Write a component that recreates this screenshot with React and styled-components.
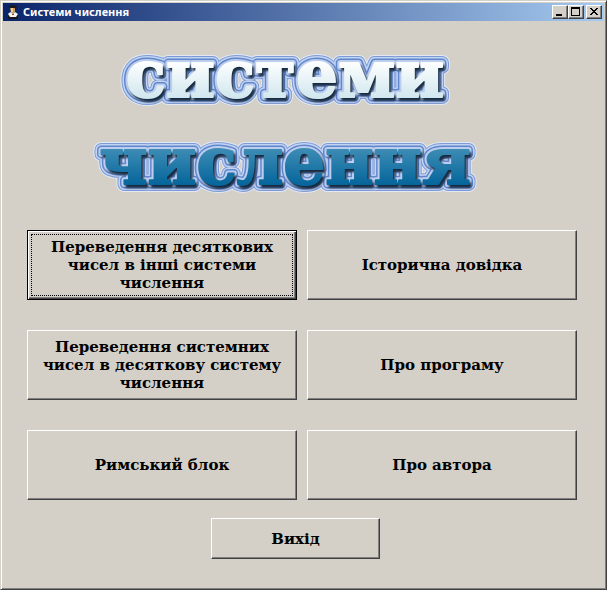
import styled, {createGlobalStyle, css} from "styled-components";

const modes = [
    {id: "from-decimal", label: "Переведення десяткових чисел в інші системи числення", selected: true},
    {id: "history", label: "Історична довідка"},
    {id: "to-decimal", label: "Переведення системних чисел в десяткову систему числення"},
    {id: "about", label: "Про програму"},
    {id: "roman", label: "Римський блок"},
    {id: "author", label: "Про автора"}
];

const LogoWord = ({id, text, from, to}) => {
    return (
        <StyledLogoWord>
            <defs>
                <linearGradient id={`${id}-fill`} x1="0" y1="14" x2="0" y2="52" gradientUnits="userSpaceOnUse">
                    <stop offset="0" stopColor={from}/>
                    <stop offset="1" stopColor={to}/>
                </linearGradient>
                <filter id={`${id}-soft`} x="-5%" y="-20%" width="110%" height="140%">
                    <feGaussianBlur stdDeviation="0.8"/>
                </filter>
                <text id={id} x="50%" y="50" textAnchor="middle">{text}</text>
            </defs>
            <use href={`#${id}`} stroke="#e3e8f3" strokeWidth="16"/>
            <use href={`#${id}`} stroke="#7c9bd6" strokeWidth="14"/>
            <use href={`#${id}`} stroke="#c3d3f2" strokeWidth="12"/>
            <use href={`#${id}`} stroke="#6087cc" strokeWidth="9"/>
            <use href={`#${id}`} stroke="#bccdee" strokeWidth="6"/>
            <use href={`#${id}`} x="2" y="3" fill="#17293f" stroke="#17293f" strokeWidth="2" filter={`url(#${id}-soft)`}/>
            <use href={`#${id}`} fill={`url(#${id}-fill)`} stroke={`url(#${id}-fill)`} strokeWidth="2"/>
        </StyledLogoWord>
    );
}

const AppIcon = () => {
    return (
        <svg width="16" height="16" viewBox="0 0 16 16" aria-hidden="true">
            <path d="M4 2l4-1 4 1-1 3H5z" fill="#1c1a1a"/>
            <path d="M5 4h5v4l-2 2-2-2z" fill="#c99a5b"/>
            <path d="M6 4h2v4H6z" fill="#f0cf8e"/>
            <path d="M3 10h10v5H3z" fill="#17181f"/>
            <path d="M4 9l2-1 2 2 2-2 3 2-2 3H5L3 10z" fill="#f4f2ee"/>
            <path d="M7 10h2v1H7z" fill="#a63a2b"/>
        </svg>
    );
}

const App = () => {
    return (
        <>
            <GlobalStyle/>
            <StyledWindow>
                <StyledTitleBar>
                    <AppIcon/>
                    <StyledCaption>Системи числення</StyledCaption>
                    <StyledCaptionButton aria-label="Згорнути">
                        <svg width="12" height="10" shapeRendering="crispEdges"><path d="M2 7h6v2H2z"/></svg>
                    </StyledCaptionButton>
                    <StyledCaptionButton aria-label="Розгорнути">
                        <svg width="12" height="10" shapeRendering="crispEdges">
                            <path fillRule="evenodd" d="M1 0h9v9H1zM2 2v6h7V2z"/>
                        </svg>
                    </StyledCaptionButton>
                    <StyledCaptionButton aria-label="Закрити" $apart>
                        <svg width="12" height="10" shapeRendering="crispEdges">
                            <path d="M2 1h2v1h1v1h2V2h1V1h2v1H9v1H8v1H7v1h1v1h1v1h1v1H8V7H7V6H5v1H4v1H2V7h1V6h1V5h1V4H4V3H3V2H2z"/>
                        </svg>
                    </StyledCaptionButton>
                </StyledTitleBar>
                <StyledContent>
                    <StyledLogo>
                        <LogoWord id="word-systems" text="системи" from="#ffffff" to="#cfe6ee"/>
                        <LogoWord id="word-numeral" text="числення" from="#3e8db5" to="#04649a"/>
                    </StyledLogo>
                    <StyledMenu>
                        {
                            modes.map(mode => {
                                return (
                                    <StyledButton key={mode.id} $selected={mode.selected}>
                                        {mode.label}
                                    </StyledButton>
                                );
                            })
                        }
                    </StyledMenu>
                    <StyledFooter>
                        <StyledExitButton>Вихід</StyledExitButton>
                    </StyledFooter>
                </StyledContent>
            </StyledWindow>
        </>
    );
}

const GlobalStyle = createGlobalStyle`
    * {
        box-sizing: border-box;
    }

    body {
        margin: 0;
        background-color: #d4d0c8;
    }
`;

const raised = css`
    border: 1px solid;
    border-color: #ffffff #404040 #404040 #ffffff;
    box-shadow: inset -1px -1px #808080;
    background-color: #d4d0c8;
`;

const StyledWindow = styled.div`
    display: flex;
    flex-direction: column;
    min-height: 100vh;
    padding: 2px;
    border: 1px solid;
    border-color: #d4d0c8 #404040 #404040 #d4d0c8;
    box-shadow: inset 1px 1px #ffffff, inset -1px -1px #808080;
    background-color: #d4d0c8;
`;

const StyledTitleBar = styled.header`
    display: flex;
    align-items: center;
    height: 18px;
    padding: 0 2px;
    background: linear-gradient(to right, #0a246a, #a6caf0);
`;

const StyledCaption = styled.span`
    flex: 1;
    padding-left: 2px;
    color: #ffffff;
    font-family: "Noto Sans", "Open Sans", sans-serif;
    font-size: 11px;
    font-weight: 700;
    line-height: 18px;
`;

const StyledCaptionButton = styled.button`
    ${raised}
    display: flex;
    width: 16px;
    height: 14px;
    margin-left: ${({$apart}) => $apart ? "2px" : "0"};
    padding: 1px;
`;

const StyledContent = styled.main`
    display: flex;
    flex-direction: column;
    padding: 26px 27px 0 24px;
`;

const StyledLogo = styled.h1`
    display: flex;
    flex-direction: column;
    gap: 23px;
    margin: 0;
    padding-right: 34px;
`;

const StyledLogoWord = styled.svg`
    display: block;
    width: 100%;
    height: 64px;
    font-family: "DejaVu Serif", serif;
    font-size: 66px;
    font-weight: 700;
    stroke-linejoin: round;
`;

const StyledMenu = styled.nav`
    display: grid;
    grid-template-columns: 1fr 1fr;
    gap: 30px 10px;
    margin-top: 32px;
`;

const StyledButton = styled.button`
    ${raised}
    height: 70px;
    padding: 0 12px;
    color: #000000;
    font-family: "DejaVu Serif", serif;
    font-size: 15px;
    font-weight: 700;
    line-height: 18px;

    ${({$selected}) => $selected && css`
        border-color: #000000;
        box-shadow: inset 1px 1px #ffffff, inset -1px -1px #404040, inset -2px -2px #808080;
        outline: 1px dotted #000000;
        outline-offset: -5px;
    `}
`;

const StyledFooter = styled.footer`
    display: flex;
    justify-content: center;
    margin-top: 18px;
    padding-right: 13px;
`;

const StyledExitButton = styled(StyledButton)`
    width: 169px;
    height: 41px;
`;

export default App;
